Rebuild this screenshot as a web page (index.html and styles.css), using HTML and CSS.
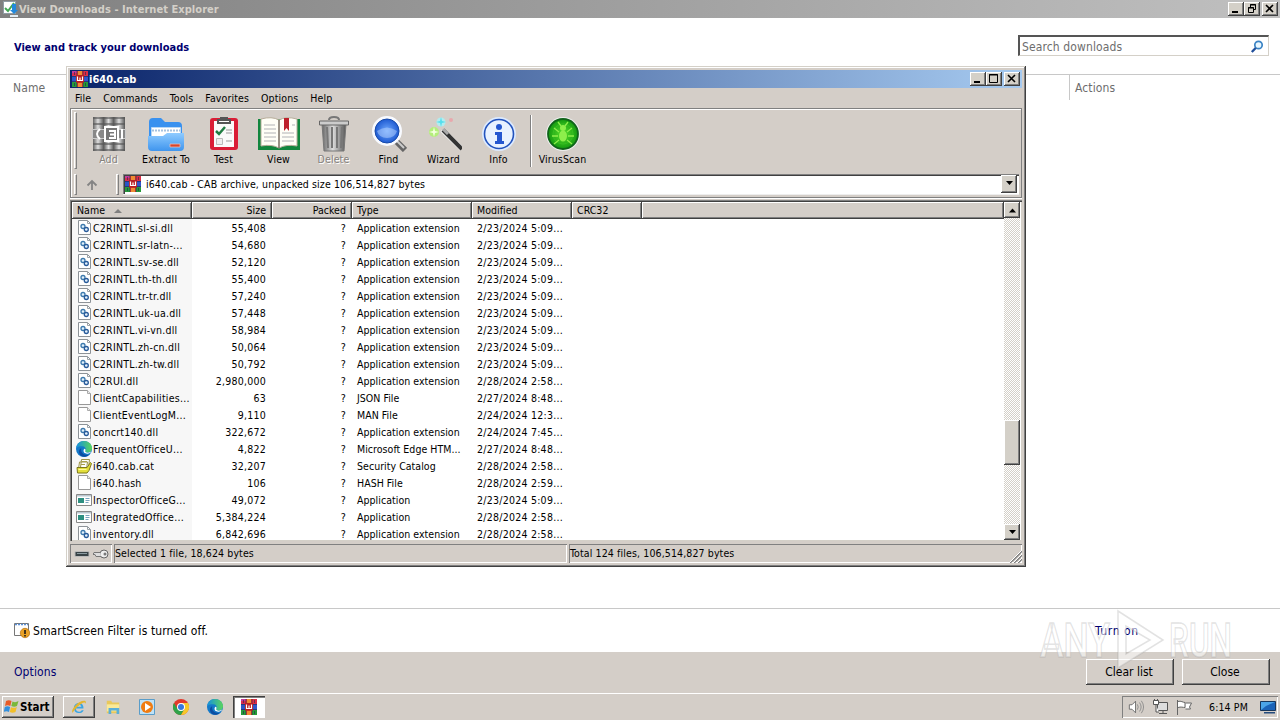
FILE: index.html
```
<!DOCTYPE html>
<html lang="en">
<head>
    <meta charset="UTF-8">
    <meta name="viewport" content="width=device-width, initial-scale=1.0">
    <title>View Downloads</title>
    <link rel="stylesheet" href="styles.css">
</head>
<body>
    <!-- Shared icons -->
    <svg class="sprite" width="0" height="0">
        <defs>
            <linearGradient id="blueFolder" x1="0" y1="0" x2="0" y2="1"><stop offset="0" stop-color="#8fcbff"/><stop offset="1" stop-color="#3f95ee"/></linearGradient>
            <linearGradient id="metal"><stop offset="0" stop-color="#666"/><stop offset=".45" stop-color="#ddd"/><stop offset="1" stop-color="#555"/></linearGradient>
            <radialGradient id="lens"><stop offset="0" stop-color="#70aaff"/><stop offset="1" stop-color="#1551cc"/></radialGradient>
            <radialGradient id="green"><stop offset="0" stop-color="#5be02c"/><stop offset="1" stop-color="#139a10"/></radialGradient>
            <linearGradient id="edgeA"><stop offset="0" stop-color="#1490df"/><stop offset="1" stop-color="#5bd65b"/></linearGradient>
        </defs>
        <symbol id="rar" viewBox="0 0 16 16">
            <path fill="#d82c50" d="M0 0h5v5H0z"/><path fill="#c33a9a" d="M0 0h5v2H0z"/><path fill="#2b55c5" d="M0 5h5v6H0z"/><path fill="#269b3a" d="M0 11h5v5H0z"/>
            <path fill="#db3b2b" d="M5 0h6v16H5z"/><path fill="#ef8b32" d="M6 0h4v4H6zM6 12h4v4H6z"/>
            <path fill="#dc2d46" d="M11 0h5v5h-5z"/><path fill="#3155ca" d="M11 5h5v6h-5z"/><path fill="#259b37" d="M11 11h5v5h-5z"/>
            <path stroke="#20254d" d="M0 5.500h16M0 10.500h16M5 0v16M11 0v16M2.500 1v3M2.500 12v3M13.500 1v3M13.500 12v3" fill="none" stroke-width=".6"/>
            <path fill="#b82023" d="M4 4h8v7.500H4z"/><path d="M5.500 5.500v4h5v-4M8 6.500v3" fill="none" stroke="#fff" stroke-width="1.200"/>
        </symbol>
        <symbol id="dll" viewBox="0 0 16 16">
            <path fill="#fff" stroke="#8d9398" d="M2.500.5h9l3 3v11h-12z"/><path fill="none" stroke="#9ca3a8" d="M11.500.5v3h3"/>
            <circle cx="7" cy="6.500" r="2" fill="#e2f0fb" stroke="#3c79ad" stroke-width="1.300"/><circle cx="10.300" cy="9.500" r="2" fill="#e2f0fb" stroke="#285b9a" stroke-width="1.300"/>
        </symbol>
        <symbol id="file" viewBox="0 0 16 16"><path fill="#fff" stroke="#989898" d="M2.500.5h9l3 3v11h-12z"/><path fill="#eee" stroke="#aaa" d="M11.500.5v3h3"/></symbol>
        <symbol id="app" viewBox="0 0 16 16"><path fill="#fff" stroke="#888" d="M.5 2.500h15v11H.5z"/><path fill="#b9c7d0" d="M1 3h14v1.500H1z"/><path fill="#2d8f81" d="M2 6h6v5H2z"/><path stroke="#78a3bd" d="M9.500 6.500h4M9.500 8.500h4M9.500 10.500h3"/></symbol>
        <symbol id="edge" viewBox="0 0 16 16">
            <circle cx="8" cy="8" r="8" fill="#1479c9"/><path fill="url(#edgeA)" d="M.2 7C1 2.500 4-.1 8.300 0 13 .2 16 3.700 16 7.200c0 2.800-2.100 4.300-4.200 4.300-2.300 0-3.300-1-2.600-1.900.9-1.300.6-4.200-2.900-4.400C3.800 5.100 1.500 5.500.2 7z"/>
            <path fill="#0c4da2" d="M5.300 7.300c-.9 3.500 1.500 7.300 7.600 6.500C9 17.500 3.500 15.800 3 11.300c-.2-2 .8-3.500 2.300-4z"/><path fill="#fff" d="M9.400 9.400c-.8 1.200.4 2.300 2.600 2.300 1.300 0 2.400-.4 3.200-1.100-.8 2.200-4.200 2.800-6.300 1.500C7 10.900 7.300 8 8.700 7.700c.8.300.9 1.200.7 1.700z"/>
        </symbol>
        <symbol id="cat" viewBox="0 0 16 16"><path fill="#fff" stroke="#9b9346" d="M5.500 1.500h8l-1 8h-8zM3.500 4h8l-1 7h-8z"/><path stroke="#aaa14c" d="M5 6.500h4M6 3.500h5"/><path fill="#e3df3b" stroke="#7c781b" d="M1 9.500h10l3.500-5 1 1-2.500 7-2 2.500H1.500z"/><path stroke="#fff99a" d="M2.500 11.500h8"/></symbol>
    </svg>

    <header class="ie-title">
        <svg class="ie-icon" viewBox="0 0 16 16"><path fill="#fff" stroke="#8f9ca5" d="M1.500.5h12v12h-12z"/><path d="m3 7 3 3 6-8" fill="none" stroke="#42a854" stroke-width="2"/><path fill="#2389dc" d="M10 3h4v6h2l-4 4-4-4h2z"/><path stroke="#e3edf3" stroke-width="2" d="M8 15h8"/></svg>
        <span>View Downloads - Internet Explorer</span>
        <div class="caption-buttons">
            <i class="cap"><svg viewBox="0 0 13 11"><path d="M3 9h6" stroke="#000" stroke-width="2"/></svg></i>
            <i class="cap"><svg viewBox="0 0 13 11"><path d="M5.500 4V1.500h5v5H8M5 2h6M3.500 4.500h5v5h-5zM3 5h6" fill="none" stroke="#000"/></svg></i>
            <i class="cap close"><svg viewBox="0 0 13 11"><path d="m3 2 7 7m0-7L3 9" stroke="#000" stroke-width="1.600"/></svg></i>
        </div>
    </header>

    <main class="downloads">
        <div class="downloads-head">
            <h1>View and track your downloads</h1>
            <div class="search"><span>Search downloads</span><svg viewBox="0 0 14 14"><circle cx="8.500" cy="5" r="3.700" fill="#e9f7ff" stroke="#3a83c4" stroke-width="1.700"/><path d="M5.700 8 1.800 12" stroke="#214f9a" stroke-width="2.400"/></svg></div>
        </div>
        <div class="downloads-cols"><span>Name</span><span class="actions">Actions</span></div>
        <div class="smartscreen">
            <svg viewBox="0 0 16 16"><path fill="#fff" stroke="#777" d="M.5.500h14v12H.5z"/><path stroke="#5c91d6" stroke-width="1.500" stroke-dasharray="2 1" d="M1 1.500h13"/><circle cx="11" cy="10" r="4.700" fill="#e9a126" stroke="#b56d0b" stroke-width=".7"/><path d="M11 7v4m0 1v1.500" stroke="#29231b" stroke-width="1.700"/></svg>
            <span>SmartScreen Filter is turned off.</span><a class="turn-on">Turn on</a>
        </div>
    </main>

    <footer class="options-bar">
        <a>Options</a>
        <button type="button">Clear list</button>
        <button type="button">Close</button>
    </footer>

    <nav class="taskbar">
        <div class="start"><svg viewBox="0 0 16 16"><path fill="#e85b26" d="M2 2c2-1.300 4-1 5.500 0L6.300 7C4.500 6 2.800 6 1 7z"/><path fill="#7ab83a" d="M8.500 2.500c2 1 4 .8 6-.4L13 7c-1.800 1-3.700 1-5.700 0z"/><path fill="#328fdd" d="M.8 8c1.800-1 3.500-.9 5.300 0L5 13c-2-1-3.500-.8-5.300 0z"/><path fill="#f2bf29" d="M7 8.200c2 .9 4 .9 5.800-.2l-1.300 5c-2 1.100-4 1-5.700 0z"/></svg><b>Start</b></div>
        <div class="task raised"><svg viewBox="0 0 18 16"><path d="M14 9.800H5.500c0 4 5 4.800 6.500 1.800h2.300c-2 5-11 4.200-11-2.600 0-7.300 11.500-7.600 10.700.8zM5.700 7.800h6C11.400 4.600 6.200 4.500 5.700 7.800z" fill="#39a5e4"/><path d="M2 14.500C-1.500 13 7.500.2 15.500 1.100c1.500.2 1.500 2 .7 3.200C15.800-1 3.500 10.500 2 14.500z" fill="#e4b62f"/></svg></div>
        <div class="task"><svg viewBox="0 0 18 16"><path fill="#e9c85a" d="M2 1h5l1 2h8v12H2z"/><path fill="#fae997" d="M2 5h14v8H2z"/><path fill="#5aafd8" d="M4 9h12v7h-3v-4H7v4H4z"/></svg></div>
        <div class="task"><svg viewBox="0 0 16 16"><path fill="#bfe2f7" stroke="#5a9dc9" d="M.5.500h15v15H.5z"/><circle cx="8" cy="8" r="6" fill="#f07c12"/><path fill="#fff" d="m6 4 6 4-6 4z"/></svg></div>
        <div class="task"><svg viewBox="0 0 16 16"><circle cx="8" cy="8" r="8" fill="#e2392c"/><path fill="#2fa34a" d="M1 4a8 8 0 0 0 7 12l3.500-6H4.600z"/><path fill="#f7c829" d="M8 16a8 8 0 0 0 7-12H8l3.500 6z"/><circle cx="8" cy="8" r="4" fill="#fff"/><circle cx="8" cy="8" r="3" fill="#3778df"/></svg></div>
        <div class="task"><svg><use href="#edge"/></svg></div>
        <div class="task pressed"><svg><use href="#rar"/></svg></div>
        <div class="tray">
            <svg viewBox="0 0 18 16"><path fill="#fff" stroke="#666" d="M1.500 5.500h3l4-4v13l-4-4h-3z"/><path d="M10.500 5q2 3 0 6M13 3q3.500 5 0 10M15 1q5 7 0 14" fill="none" stroke="#888"/></svg>
            <svg viewBox="0 0 16 16"><path fill="#ddd" stroke="#555" d="M5.500 3.500h10v8h-10zM7 14.500h8M11 12v2"/><path fill="#fff" stroke="#555" d="M1.500 1.500h5v4h-5zM2.500 0v2M5.500 0v2M4 6v7h3"/></svg>
            <svg viewBox="0 0 16 16"><path fill="#fff" stroke="#666" d="M1.500 1v15M2 2.500c3-1 5 1 7 1v5c-2 0-4-1-7 0M9.500 4h6l-2 4 1 2h-5"/></svg>
            <span>6:14 PM</span>
            <svg class="desk" viewBox="0 0 16 16"><path fill="#1b63b8" stroke="#17365c" d="M.5 2.500h15v9H.5z"/><path fill="#4ba4e8" d="M1 3h14l-9 4-5 4z"/><path fill="#244b7c" d="M4 13h11v1.500H4z"/></svg>
        </div>
    </nav>

    <section class="window">
        <div class="win-title"><svg><use href="#rar"/></svg><b>i640.cab</b>
            <div class="caption-buttons">
                <i class="cap"><svg viewBox="0 0 13 11"><path d="M3 9h6" stroke="#000" stroke-width="2"/></svg></i>
                <i class="cap"><svg viewBox="0 0 13 11"><path d="M2.500 1.500h8v8h-8zM2 2h9" fill="none" stroke="#000"/></svg></i>
                <i class="cap close"><svg viewBox="0 0 13 11"><path d="m3 2 7 7m0-7L3 9" stroke="#000" stroke-width="1.600"/></svg></i>
            </div>
        </div>
        <div class="menu"><span>File</span><span>Commands</span><span>Tools</span><span>Favorites</span><span>Options</span><span>Help</span></div>

        <div class="rebar">
            <div class="toolbar">
                <i class="grip"></i>
                <div class="tool disabled">
                    <svg viewBox="0 0 36 36"><path fill="url(#metal)" d="M2 1h11v34H2z"/><path fill="url(#metal)" d="M13 1h10v34H13z"/><path fill="url(#metal)" d="M23 1h11v34H23z"/><path stroke="#555" stroke-opacity=".6" stroke-width="2" d="M2 2h32M2 8h32M2 28h32M2 34h32"/><path fill="#888" stroke="#ccc" d="M1.500 13.500h33v9h-33z"/><path fill="#777" stroke="#fff" stroke-width="2" d="M14 11h13v14H14z"/><path d="M9 13q-6 5 0 10M18 15h6v7h-6M19 18.500h5M31 13v10" fill="none" stroke="#fff" stroke-width="2"/></svg>Add</div>
                <div class="tool wide">
                    <svg viewBox="0 0 36 36"><path fill="#3991ef" d="M1 6q0-4 4-4h8l4 4h13q4 0 4 4v14H1z"/><path fill="#fff" stroke="#b8d7f5" d="M3.500 11.500h29v15h-29z"/><path d="M4 14.500h28" stroke="#a6c2df" stroke-width="2" stroke-dasharray="2 1"/><path fill="url(#blueFolder)" d="M0 20h15l4-3h17v14q0 4-4 4H4q-4 0-4-4z"/><path fill="#d8452c" stroke="#f3c3bc" stroke-width=".7" d="M22 28h10v3H22z"/></svg>Extract To</div>
                <div class="tool">
                    <svg viewBox="0 0 36 36"><rect x="4" y="2" width="28" height="32" rx="3" fill="#da1d36"/><path fill="#fafafa" d="M8 5h20v26H8z"/><path fill="#555" d="M11 3h3V1h8v2h3v5H11z"/><path fill="#fff" d="M13 5h10v1H13z"/><path d="m10 15 3 3 6-7" fill="none" stroke="#207d43" stroke-width="2.500"/><path d="M20 14h6M20 17h6M20 25h6" stroke="#999"/><path fill="#eee" stroke="#bbb" d="M10.500 22.500h6v6h-6z"/></svg>Test</div>
                <div class="tool">
                    <svg class="book" viewBox="0 0 42 36"><path fill="#12863e" d="M0 3h42v31H0z"/><path fill="#fffef7" stroke="#b7ad9a" d="M3 3q11-3 18 1 7-4 18-1v27q-11-2-18 2-7-4-18-2z"/><path d="M21 4v28" stroke="#776d62" stroke-width="1.500"/><path d="M6 9h11M6 13h12M6 17h12M6 21h12M6 25h12M34 9h3M24 17h12M24 21h12M24 25h12" stroke="#ccc" stroke-width="1.300"/><path fill="#bd202b" d="M26 2h5v13l-2.500-3-2.500 3z"/></svg>View</div>
                <div class="tool disabled">
                    <svg viewBox="0 0 36 36"><path fill="url(#metal)" stroke="#777" d="M6 8h24l-2 27H8z"/><path d="M11 11l1 21M16 11v21M21 11v21M26 11l-1 21" stroke="#777" stroke-width="2"/><path fill="#ccc" stroke="#666" d="M3.500 5h29v4h-29z"/><path d="M13 4q0-3 5-3t5 3" fill="none" stroke="#777" stroke-width="2"/></svg>Delete</div>
                <div class="tool">
                    <svg viewBox="0 0 36 36"><path d="m25 25 9 9" stroke="#666" stroke-width="6"/><path d="m25 24 8 8" stroke="#ccc" stroke-width="2"/><circle cx="16" cy="15" r="13.500" fill="url(#lens)" stroke="#f8faff" stroke-width="3"/><circle cx="16" cy="15" r="12" fill="none" stroke="#164aaa"/><path fill="#b7d3ff" opacity=".5" d="M6 15q10-7 20 0-2 7-10 7T6 15z"/></svg>Find</div>
                <div class="tool">
                    <svg viewBox="0 0 36 36"><path d="m16 14 20 19" stroke="#eee" stroke-width="5"/><path d="m17 14 19 19" stroke="#333" stroke-width="4"/><path d="m17 13 5 5" stroke="#aaa" stroke-width="3"/><circle cx="15" cy="6" r="4.500" fill="#b1edf0"/><path fill="#56dfee" d="m15 1 1 4 4 1-4 1-1 4-1-4-4-1 4-1z"/><circle cx="8" cy="16" r="5" fill="#b4ee7c"/><path fill="#f4ffe0" d="m8 11 1 4 4 1-4 1-1 4-1-4-4-1 4-1z"/><circle cx="25" cy="4" r="2" fill="#e8a8ad"/></svg>Wizard</div>
                <div class="tool">
                    <svg viewBox="0 0 36 36"><circle cx="18" cy="18" r="17" fill="#dceaff"/><circle cx="18" cy="18" r="14.500" fill="#e8f2ff" stroke="#2253bd" stroke-width="1.600"/><circle cx="18" cy="11" r="3" fill="#2457d0"/><path fill="#2457d0" d="M14 16h7v9h2v3h-9v-3h2v-6h-2z"/></svg>Info</div>
                <i class="divider"></i>
                <div class="tool scan">
                    <svg viewBox="0 0 36 36"><circle cx="18" cy="18" r="17" fill="#eee"/><circle cx="18" cy="18" r="15" fill="url(#green)" stroke="#11641a" stroke-width="1.800"/><circle cx="18" cy="18" r="10" fill="none" stroke="#37bf21"/><ellipse cx="18" cy="20" rx="4" ry="5.500" fill="#8dee4b"/><circle cx="18" cy="12" r="3" fill="#8dee4b"/><path d="m14 16-5-4m4 8H7m7 4-5 4m13-12 5-4m-4 8h6m-7 4 5 4M16 10l-3-4m7 4 3-4" stroke="#8dee4b" stroke-width="1.300"/></svg>VirusScan</div>
            </div>
            <div class="address-row">
                <i class="grip"></i>
                <svg class="up" viewBox="0 0 12 12"><path d="M6 11V2M1.500 6.500 6 2l4.500 4.500" fill="none" stroke="#848484" stroke-width="1.800"/></svg>
                <i class="grip"></i>
                <div class="address"><svg><use href="#rar"/></svg><span>i640.cab - CAB archive, unpacked size 106,514,827 bytes</span><i class="arrow-btn"><svg viewBox="0 0 9 5"><path d="M1 0h7L4.500 4z"/></svg></i></div>
            </div>
        </div>

        <div class="list">
            <div class="list-main">
                <div class="row head"><span>Name <i class="sort"></i></span><span>Size</span><span>Packed</span><span>Type</span><span>Modified</span><span>CRC32</span><span></span></div>
                <div id="rows"></div>
            </div>
            <div class="scroll">
                <i class="arrow-btn"><svg viewBox="0 0 9 5"><path d="M1 4.500h7L4.500.5z"/></svg></i>
                <i class="thumb"></i>
                <i class="arrow-btn"><svg viewBox="0 0 9 5"><path d="M1 0h7L4.500 4z"/></svg></i>
            </div>
        </div>

        <div class="status">
            <div class="pane icons">
                <svg viewBox="0 0 16 14"><path fill="#384347" stroke="#bbb" d="M1 4.500h14v5H1z"/><path stroke="#8a9aa0" d="M3 6.500h10"/></svg>
                <svg viewBox="0 0 16 14"><circle cx="11" cy="7" r="4" fill="#eee" stroke="#666"/><circle cx="12" cy="7" r="1.500" fill="#777"/><path fill="#ddd" stroke="#777" d="M7.500 5.500H1l-1 2h2l1 2h5"/></svg>
            </div>
            <div class="pane selected">Selected 1 file, 18,624 bytes</div>
            <div class="pane total">Total 124 files, 106,514,827 bytes<svg class="resize" viewBox="0 0 13 13"><path d="M1 13 13 1M5 13l8-8M9 13l4-4" stroke="#808080" stroke-width="1.600"/><path d="M0 13 13 0M4 13l9-9M8 13l5-5" stroke="#fff"/></svg></div>
        </div>
    </section>

    <svg class="watermark" viewBox="0 0 210 64">
        <text x="4" y="49" textLength="70" lengthAdjust="spacingAndGlyphs">ANY</text>
        <path d="m82 3 45 29-45 28V3zm8 15v28l24-14z"/>
        <text x="133" y="49" textLength="63" lengthAdjust="spacingAndGlyphs">RUN</text>
    </svg>

    <script>
        const ext = "Application extension";
        const files = [
            ["dll", "C2RINTL.sl-si.dll", "55,408", ext, "2/23/2024 5:09..."],
            ["dll", "C2RINTL.sr-latn-...", "54,680", ext, "2/23/2024 5:09..."],
            ["dll", "C2RINTL.sv-se.dll", "52,120", ext, "2/23/2024 5:09..."],
            ["dll", "C2RINTL.th-th.dll", "55,400", ext, "2/23/2024 5:09..."],
            ["dll", "C2RINTL.tr-tr.dll", "57,240", ext, "2/23/2024 5:09..."],
            ["dll", "C2RINTL.uk-ua.dll", "57,448", ext, "2/23/2024 5:09..."],
            ["dll", "C2RINTL.vi-vn.dll", "58,984", ext, "2/23/2024 5:09..."],
            ["dll", "C2RINTL.zh-cn.dll", "50,064", ext, "2/23/2024 5:09..."],
            ["dll", "C2RINTL.zh-tw.dll", "50,792", ext, "2/23/2024 5:09..."],
            ["dll", "C2RUI.dll", "2,980,000", ext, "2/28/2024 2:58..."],
            ["file", "ClientCapabilities...", "63", "JSON File", "2/27/2024 8:48..."],
            ["file", "ClientEventLogM...", "9,110", "MAN File", "2/24/2024 12:3..."],
            ["dll", "concrt140.dll", "322,672", ext, "2/24/2024 7:45..."],
            ["edge", "FrequentOfficeU...", "4,822", "Microsoft Edge HTM...", "2/27/2024 8:48..."],
            ["cat", "i640.cab.cat", "32,207", "Security Catalog", "2/28/2024 2:58..."],
            ["file", "i640.hash", "106", "HASH File", "2/28/2024 2:59..."],
            ["app", "InspectorOfficeG...", "49,072", "Application", "2/23/2024 5:09..."],
            ["app", "IntegratedOffice...", "5,384,224", "Application", "2/28/2024 2:58..."],
            ["dll", "inventory.dll", "6,842,696", ext, "2/28/2024 2:58..."]
        ];

        // Build the archive file list
        document.getElementById("rows").innerHTML = files.map(([icon, name, size, type, modified]) => `
            <div class="row">
                <span><svg><use href="#${icon}"/></svg>${name}</span>
                <span>${size}</span>
                <span>?</span>
                <span>${type}</span>
                <span>${modified}</span>
            </div>`).join("");
    </script>
</body>
</html>
```
FILE: styles.css
```
* {
    margin: 0;
    padding: 0;
    box-sizing: border-box;
}
body {
    width: 1280px;
    height: 720px;
    overflow: hidden;
    display: flex;
    flex-direction: column;
    position: relative;
    background: #fff;
    color: #000;
    font-family: "DejaVu Sans Condensed", "DejaVu Sans", sans-serif;
    font-stretch: condensed;
    font-size: 10.5px;
    letter-spacing: 0.12px;
    white-space: nowrap;
}
svg {
    display: block;
    flex: none;
    width: 16px;
    height: 16px;
}
i {
    display: block;
    flex: none;
}
.sprite {
    position: absolute;
    width: 0;
    height: 0;
}

/* Internet Explorer window */
.ie-title {
    height: 18px;
    display: flex;
    align-items: center;
    padding: 0 2px;
    background: linear-gradient(90deg, #808080, #c0c0c0);
    color: #d4d0c8;
    font-weight: bold;
    font-size: 11px;
    letter-spacing: 0.05px;
}
.ie-title span {
    margin-left: 1px;
}
.caption-buttons {
    display: flex;
    margin-left: auto;
}
.cap, .arrow-btn, .thumb {
    background: #d4d0c8;
    box-shadow: inset -1px -1px #404040, inset 1px 1px #fff, inset -2px -2px #808080;
}
.cap {
    width: 16px;
    height: 14px;
    padding: 1px;
}
.cap svg {
    width: 13px;
    height: 11px;
}
.close {
    margin-left: 2px;
}
.downloads {
    flex: 1;
    display: flex;
    flex-direction: column;
}
.downloads-head {
    height: 57px;
    display: flex;
    align-items: center;
    justify-content: space-between;
    padding: 0 11px 0 14px;
    border-bottom: 1px solid #c8c8c8;
}
h1 {
    color: #000070;
    font-size: 11px;
    letter-spacing: 0;
    margin-top: 2px;
}
.search {
    width: 251px;
    height: 21px;
    margin-bottom: 1px;
    padding: 1px 4px 0;
    display: flex;
    align-items: center;
    justify-content: space-between;
    border: 1px solid #d4d0c8;
    border-top: 2px solid #555;
    border-left: 2px solid #555;
    color: #6d6d6d;
    font-size: 12px;
}
.search span {
    margin-left: -2px;
}
.search svg {
    width: 14px;
    height: 14px;
}
.downloads-cols {
    height: 25px;
    display: flex;
    justify-content: space-between;
    line-height: 26px;
    padding-left: 13px;
    color: #6d6d6d;
    font-size: 12px;
}
.actions {
    width: 211px;
    padding-left: 5px;
    border-left: 1px solid #c8c8c8;
}
.smartscreen {
    height: 44px;
    margin-top: auto;
    display: flex;
    align-items: center;
    padding-left: 14px;
    border-top: 1px solid #c8c8c8;
    font-size: 12px;
}
.smartscreen span {
    margin-left: 3px;
    width: 1062px;
}
.smartscreen a, .options-bar a {
    color: #000070;
}
.turn-on {
    letter-spacing: 0.6px;
}
.options-bar {
    height: 41px;
    display: flex;
    align-items: center;
    padding: 0 10px 1px 14px;
    background: #d4cec8;
    font-size: 12px;
}
.options-bar a {
    margin-right: auto;
}
.options-bar button {
    width: 88px;
    height: 26px;
    margin-left: 8px;
    padding-right: 2px;
    border: 0;
    background: #d4cec8;
    box-shadow: inset -1px -1px #404040, inset 1px 1px #fff, inset -2px -2px #808080;
    font: inherit;
    letter-spacing: 0;
}

/* Taskbar */
.taskbar {
    height: 27px;
    display: flex;
    align-items: center;
    padding: 0 2px;
    background: #d4cec8;
    border-top: 1px solid #fff;
}
.start, .raised {
    box-shadow: inset -1px -1px #404040, inset 1px 1px #fff, inset -2px -2px #808080;
}
.start {
    width: 52px;
    height: 22px;
    margin-right: 9px;
    padding-left: 2px;
    display: flex;
    align-items: center;
    font-size: 11.5px;
    letter-spacing: 0;
}
.task {
    width: 32px;
    height: 22px;
    margin-right: 2px;
    display: flex;
    align-items: center;
    justify-content: center;
}
.pressed {
    background: #fff;
    box-shadow: inset 1px 1px #404040, inset 2px 2px #808080, inset -1px -1px #fff;
}
.tray {
    width: 156px;
    height: 22px;
    margin-left: auto;
    padding: 0 2px 0 6px;
    display: flex;
    align-items: center;
    gap: 8px;
    box-shadow: inset 1px 1px #808080, inset -1px -1px #fff;
}
.tray span {
    margin-left: 9px;
}
.desk {
    margin-left: auto;
}

/* Archive window */
.window {
    position: absolute;
    left: 66px;
    top: 66px;
    width: 960px;
    height: 501px;
    padding: 4px;
    display: flex;
    flex-direction: column;
    background: #d4cec8;
    box-shadow: inset -1px -1px #404040, inset 1px 1px #d4d0c8, inset -2px -2px #808080, inset 2px 2px #fff;
}
.win-title {
    height: 18px;
    display: flex;
    align-items: center;
    padding: 0 2px;
    background: linear-gradient(90deg, #0a246a, #a6caf0);
    color: #fff;
    font-size: 11px;
}
.win-title b {
    margin-left: 1px;
    letter-spacing: 0;
}
.menu {
    height: 20px;
    display: flex;
    gap: 12px;
    padding-left: 5px;
    line-height: 20px;
}
.rebar {
    height: 90px;
    border: 1px solid #808080;
    box-shadow: inset 1px 1px #fff, 0 1px #fff;
}
.toolbar {
    height: 63px;
    display: flex;
    align-items: center;
    padding-left: 3px;
}
.grip {
    width: 3px;
    height: 57px;
    border: 1px solid #fff;
    border-right-color: #808080;
    border-bottom-color: #808080;
}
.tool {
    width: 55px;
    height: 50px;
    display: flex;
    flex-direction: column;
    align-items: center;
    justify-content: space-between;
    line-height: 13px;
}
.toolbar .grip + .tool {
    margin-left: 4px;
}
.tool.wide {
    width: 60px;
}
.tool svg {
    width: 36px;
    height: 36px;
}
.tool .book {
    width: 42px;
}
.disabled {
    color: #85817c;
    text-shadow: 1px 1px #fff;
}
.divider {
    width: 2px;
    height: 52px;
    margin: 0 3px 0 4px;
    border-left: 1px solid #808080;
    border-right: 1px solid #fff;
}
.address-row {
    height: 25px;
    display: flex;
    align-items: center;
    padding: 0 2px 0 3px;
}
.address-row .grip {
    height: 21px;
}
.up {
    width: 12px;
    height: 12px;
    margin: 0 18px 0 9px;
}
.address {
    flex: 1;
    height: 21px;
    margin-left: 4px;
    padding: 2px;
    display: flex;
    align-items: center;
    background: #fff;
    border-bottom: 1px solid #eee;
    box-shadow: inset 1px 1px #808080, inset 2px 2px #404040;
}
.address span {
    margin-left: 5px;
}
.arrow-btn {
    width: 16px;
    height: 16px;
    padding: 6px 4px;
}
.arrow-btn svg {
    width: 9px;
    height: 5px;
}
.address .arrow-btn {
    height: 18px;
    margin-left: auto;
}
.list {
    height: 341px;
    margin-top: 2px;
    padding: 2px 2px 1px;
    display: flex;
    background: #fff;
    box-shadow: inset 1px 1px #808080, inset 2px 2px #404040, inset -1px -1px #d4d0c8;
}
.list-main {
    flex: 1;
    overflow: hidden;
    background: linear-gradient(90deg, #f7f7f7 120px, #fff 120px);
}
.row {
    height: 17px;
    display: grid;
    grid-template-columns: 120px 80px 80px 120px 100px 70px 1fr;
    line-height: 17px;
}
.row span {
    display: flex;
    align-items: center;
    padding: 0 6px 0 5px;
    letter-spacing: 0.25px;
}
.row span:nth-child(2), .row span:nth-child(3) {
    justify-content: flex-end;
}
.row span:nth-child(4), .row.head span {
    letter-spacing: 0.04px;
}
.row:not(.head) span:first-child {
    padding: 0 0 0 4px;
}
.row svg {
    margin: -1px 1px 0 0;
}
.head {
    margin-bottom: 1px;
}
.head span {
    background: #d4cec8;
    box-shadow: inset -1px -1px #404040, inset 1px 1px #fff, inset -2px -2px #808080;
}
.sort {
    margin-left: 9px;
    border: 4px solid transparent;
    border-top: 0;
    border-bottom-color: #808080;
}
.scroll {
    width: 16px;
    display: flex;
    flex-direction: column;
    background: repeating-conic-gradient(#d4d0c8 0 25%, #fff 0 50%) 0 0 / 2px 2px;
}
.thumb {
    height: 45px;
    margin: 202px 0 auto;
}
.status {
    height: 19px;
    margin-top: 3px;
    display: flex;
    gap: 2px;
}
.pane {
    height: 19px;
    padding-left: 1px;
    line-height: 19px;
    box-shadow: inset 1px 1px #808080, inset -1px -1px #fff;
}
.icons {
    width: 42px;
    display: flex;
    align-items: center;
    gap: 3px;
    padding-left: 4px;
}
.selected {
    width: 453px;
}
.total {
    flex: 1;
    display: flex;
    justify-content: space-between;
}
.resize {
    width: 13px;
    height: 13px;
    margin-top: 6px;
}

/* Watermark */
.watermark {
    position: absolute;
    left: 1036px;
    top: 608px;
    width: 210px;
    height: 64px;
    overflow: visible;
    fill: rgba(255, 255, 255, 0.55);
    stroke: rgba(160, 160, 160, 0.3);
    stroke-width: 1.5px;
    font: 500 49px Roboto, sans-serif;
    letter-spacing: 0;
}
```
